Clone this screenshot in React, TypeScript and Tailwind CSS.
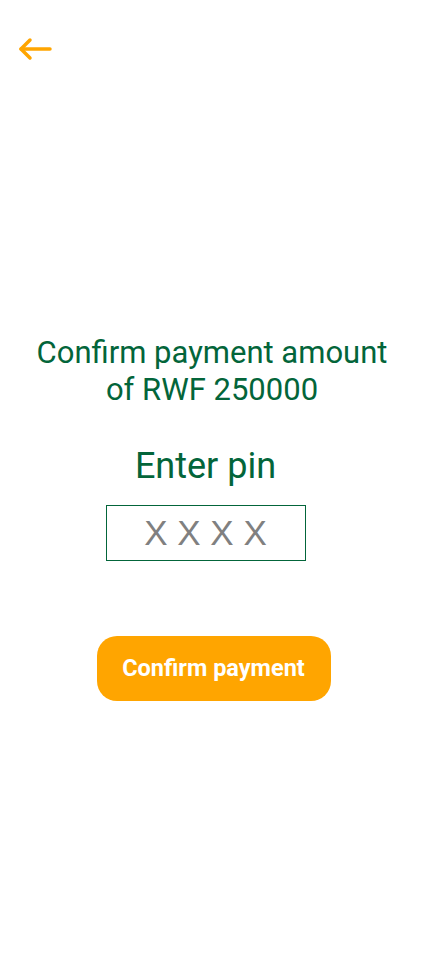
export default function App() {
  return (
    <div className="min-h-[956px] w-full bg-white flex flex-col" style={{ fontFamily: "Roboto, 'Liberation Sans', sans-serif" }}>
      <div className="px-[18px] pt-[37px]">
        <button className="text-[#FFA500] block" aria-label="back">
          <svg width="34" height="24" viewBox="0 0 34 24" fill="none" stroke="currentColor" strokeWidth="3.5" strokeLinecap="round" strokeLinejoin="round">
            <path d="M32 12H3" />
            <path d="M12 3L3 12L12 21" />
          </svg>
        </button>
      </div>

      <div className="flex flex-col items-center pt-[273px]">
        <h1 className="mr-[16px] text-center text-[31px] leading-[37px] text-[#03653a] font-normal whitespace-nowrap">
          Confirm payment amount
          <br />
          of RWF 250000
        </h1>
        <h2 className="mr-[29px] mt-[38px] text-[36px] leading-[40px] text-[#03653a] font-normal">Enter pin</h2>
        <input
          type="password"
          placeholder="X X X X"
          className="mr-[29px] mt-[19px] w-[200px] h-[56px] border border-[#03653a] text-center text-[35px] placeholder:text-[#808080] outline-none"
          style={{ fontFamily: "'Liberation Sans', Arial, sans-serif" }}
        />
        <button className="mr-[13px] mt-[75px] w-[234px] h-[65px] rounded-[20px] bg-[#FFA500] text-white text-[23.5px] font-bold">
          Confirm payment
        </button>
      </div>
    </div>
  );
}
